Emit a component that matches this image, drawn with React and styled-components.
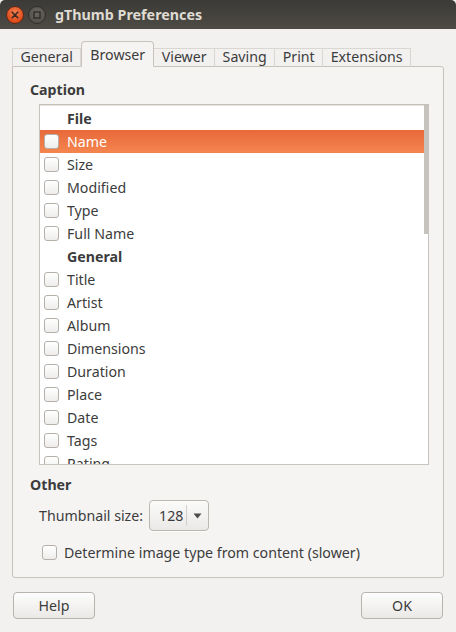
import React from 'react';
import styled, { createGlobalStyle } from 'styled-components';

const GlobalStyle = createGlobalStyle`
  html, body {
    margin: 0;
    padding: 0;
  }
  body {
    background: #f2f1f0;
    font-family: "Noto Sans", "DejaVu Sans", sans-serif;
    font-size: 14.2px;
    color: #3c3c3c;
  }
`;

const Window = styled.div`
  width: 456px;
  height: 632px;
  display: flex;
  flex-direction: column;
  background: #f2f1f0;
  overflow: hidden;
`;

const TitleBar = styled.div`
  height: 29px;
  flex: none;
  display: flex;
  align-items: center;
  padding-left: 6px;
  background: linear-gradient(#3b3a36, #4e4b45);
  border-radius: 5px 5px 0 0;
`;

const WinButton = styled.div`
  width: 18px;
  height: 18px;
  border-radius: 50%;
  margin-right: 4px;
  display: flex;
  align-items: center;
  justify-content: center;
  box-sizing: border-box;
  border: 1px solid ${p => (p.close ? '#5a2a1a' : '#2f2e2b')};
  background: ${p =>
    p.close
      ? 'radial-gradient(circle at 50% 35%, #f4814f, #df4b1b 70%)'
      : 'radial-gradient(circle at 50% 35%, #6b6863, #54514c 70%)'};
`;

const Title = styled.div`
  margin-left: 5px;
  font-weight: bold;
  font-size: 14.3px;
  color: #dfdbd2;
`;

const Body = styled.div`
  flex: 1;
  display: flex;
  flex-direction: column;
  padding: 12px 12px 0 12px;
`;

const TabBar = styled.div`
  display: flex;
  align-items: flex-end;
  height: 26px;
  position: relative;
  z-index: 1;
  margin-bottom: -1px;
`;

const Tab = styled.div`
  box-sizing: border-box;
  padding: ${p => (p.active ? '5px 8px 0' : '0 7.5px 3px')};
  height: ${p => (p.active ? '26px' : '19px')};
  line-height: 15px;
  color: #3c3c3c;
  border: 1px solid ${p => (p.active ? '#c8c3bd' : '#dad6d1')};
  border-bottom: ${p => (p.active ? '1px solid #f5f4f3' : '1px solid #c8c3bd')};
  border-left: ${p => (p.first || p.active ? undefined : 'none')};
  border-radius: ${p => (p.active ? '4px 4px 0 0' : '0')};
  background: ${p => (p.active ? '#f5f4f3' : '#f2f1f0')};
`;

const Page = styled.div`
  height: 512px;
  box-sizing: border-box;
  border: 1px solid #c8c3bd;
  border-radius: 0 3px 3px 3px;
  background: #f5f4f3;
  padding: 13px 14px 0 17px;
  display: flex;
  flex-direction: column;
`;

const Heading = styled.div`
  font-weight: bold;
  line-height: 20px;
  margin-top: ${p => p.top || 0}px;
`;

const ListBox = styled.div`
  margin: 4px 0 0 9px;
  height: 361px;
  box-sizing: border-box;
  border: 1px solid #c8c3bd;
  border-top-color: #c2beb9;
  background: #ffffff;
  display: flex;
  overflow: hidden;
  padding-top: 2px;
  box-shadow: inset 0 1px 0 #e6e3e0;
`;

const Rows = styled.div`
  flex: 1;
  display: flex;
  flex-direction: column;
`;

const Row = styled.div`
  height: 23px;
  flex: none;
  display: flex;
  align-items: center;
  padding-left: 4px;
  color: ${p => (p.selected ? '#ffffff' : '#3c3c3c')};
  font-weight: ${p => (p.header ? 'bold' : 'normal')};
  background: ${p =>
    p.selected ? 'linear-gradient(#e8693a, #f5854f)' : 'transparent'};
`;

const Spacer = styled.div`
  width: 15px;
  margin-right: 8px;
  flex: none;
`;

const Check = styled.div`
  width: 15px;
  height: 15px;
  flex: none;
  box-sizing: border-box;
  border: 1px solid #b5b0aa;
  border-radius: 3px;
  background: linear-gradient(#ffffff, #eeedec);
  margin-right: ${p => p.gap || 8}px;
`;

const Track = styled.div`
  width: 4px;
  flex: none;
  margin-top: -2px;
`;

const Thumb = styled.div`
  height: 129px;
  background: #c6c2bd;
`;

const FormRow = styled.div`
  display: flex;
  align-items: center;
  margin: ${p => p.margin};
`;

const Combo = styled.div`
  margin-left: 6px;
  width: 60px;
  height: 31px;
  box-sizing: border-box;
  border: 1px solid #bcb7b1;
  border-radius: 4px;
  background: linear-gradient(#fbfbfa, #ebe9e7);
  box-shadow: 0 1px 0 rgba(255, 255, 255, 0.6);
  display: flex;
  align-items: center;
  padding-left: 9px;
`;

const ComboSep = styled.div`
  width: 1px;
  height: 21px;
  background: #d3cfca;
  margin: 0 6px 0 3px;
`;

const Footer = styled.div`
  display: flex;
  justify-content: space-between;
  margin-top: 14px;
  padding-left: 1px;
  padding-right: 1px;
`;

const Button = styled.div`
  width: 82px;
  height: 27px;
  box-sizing: border-box;
  border: 1px solid #b8b3ad;
  border-radius: 4px;
  background: linear-gradient(#fdfdfd, #ebe9e6);
  display: flex;
  align-items: center;
  justify-content: center;
  color: #3c3c3c;
`;

const tabs = ['General', 'Browser', 'Viewer', 'Saving', 'Print', 'Extensions'];

const items = [
  { label: 'File', header: true },
  { label: 'Name', selected: true },
  { label: 'Size' },
  { label: 'Modified' },
  { label: 'Type' },
  { label: 'Full Name' },
  { label: 'General', header: true },
  { label: 'Title' },
  { label: 'Artist' },
  { label: 'Album' },
  { label: 'Dimensions' },
  { label: 'Duration' },
  { label: 'Place' },
  { label: 'Date' },
  { label: 'Tags' },
  { label: 'Rating' },
];

export default function App() {
  return (
    <Window>
      <GlobalStyle />
      <TitleBar>
        <WinButton close>
          <svg width="8" height="8" viewBox="0 0 8 8">
            <path d="M1.2 1.2 L6.8 6.8 M6.8 1.2 L1.2 6.8" stroke="#3a2a22" strokeWidth="1.6" strokeLinecap="round" />
          </svg>
        </WinButton>
        <WinButton>
          <svg width="8" height="8" viewBox="0 0 8 8">
            <rect x="1" y="1" width="6" height="6" fill="none" stroke="#2e2d2a" strokeWidth="1.4" />
          </svg>
        </WinButton>
        <Title>gThumb Preferences</Title>
      </TitleBar>
      <Body>
        <TabBar>
          {tabs.map((t, i) => (
            <Tab key={t} first={i === 0} active={t === 'Browser'}>
              {t}
            </Tab>
          ))}
        </TabBar>
        <Page>
          <Heading>Caption</Heading>
          <ListBox>
            <Rows>
              {items.map(it => (
                <Row key={it.label + (it.header ? 'h' : '')} header={it.header} selected={it.selected}>
                  {it.header ? <Spacer /> : <Check />}
                  {it.label}
                </Row>
              ))}
            </Rows>
            <Track>
              <Thumb />
            </Track>
          </ListBox>
          <Heading top={10}>Other</Heading>
          <FormRow margin="5px 0 0 9px">
            Thumbnail size:
            <Combo>
              128
              <ComboSep />
              <svg width="9" height="6" viewBox="0 0 9 6">
                <path d="M0.5 0.5 L8.5 0.5 L4.5 5.5 Z" fill="#4c4c4c" />
              </svg>
            </Combo>
          </FormRow>
          <FormRow margin="12px 0 0 12px">
            <Check gap={7} />
            Determine image type from content (slower)
          </FormRow>
        </Page>
        <Footer>
          <Button>Help</Button>
          <Button>OK</Button>
        </Footer>
      </Body>
    </Window>
  );
}
